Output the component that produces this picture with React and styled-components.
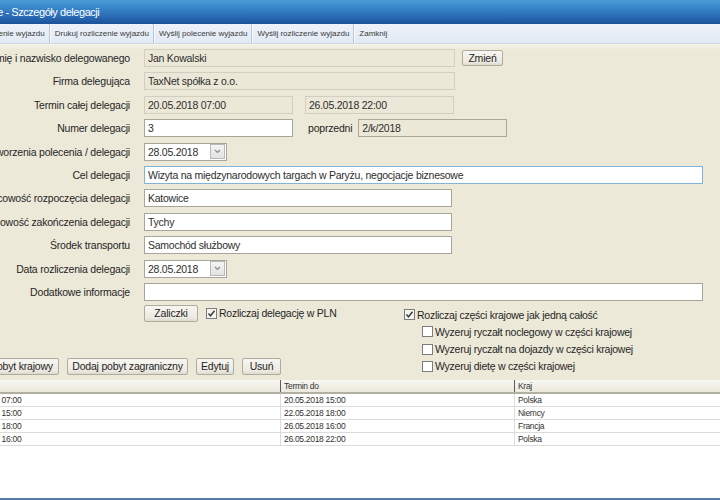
import React from 'react';
import styled, { createGlobalStyle } from 'styled-components';

const Global = createGlobalStyle`
  html, body { margin: 0; padding: 0; overflow: hidden; background: #ece9d8; }
  body { font-family: "Liberation Sans", Arial, sans-serif; }
`;

// window is partly off the left edge of the screen
const Window = styled.div`
  margin-left: -60px;
  width: 780px;
  height: 500px;
  display: flex;
  flex-direction: column;
  background: #ece9d8;
`;

const TitleBar = styled.div`
  height: 24px;
  flex: none;
  display: flex;
  align-items: center;
  padding-left: 18px;
  background: linear-gradient(#4b9bd8 0%, #3a88cb 30%, #2666b0 75%, #1c5198 100%);
  color: #fff;
  font-size: 11px;
  letter-spacing: -0.45px;
  white-space: nowrap;
`;

const Toolbar = styled.div`
  height: 19px;
  flex: none;
  display: flex;
  align-items: stretch;
  padding-left: 9px;
  background: linear-gradient(#eef3fa, #e1e9f4);
  border-bottom: 1px solid #d3dae4;
  font-size: 8px;
  color: #3a3a3a;
`;

const ToolItem = styled.div`
  display: flex;
  align-items: center;
  padding: 0 4px 0 5px;
  white-space: nowrap;
  border-right: ${p => (p.$last ? 'none' : '1px solid #bcc6d3')};
  box-shadow: ${p => (p.$last ? 'none' : '1px 0 0 #f7f9fc')};
`;

const Form = styled.div`
  display: flex;
  flex-direction: column;
  gap: 5.4px;
  padding-top: 5px;
  background: linear-gradient(#f4f2e7 0, #ece9d8 6px);
`;

const Row = styled.div`
  display: grid;
  grid-template-columns: 190px auto;
  column-gap: 14px;
  height: 18px;
  align-items: center;
`;

const Label = styled.div`
  display: flex;
  justify-content: flex-end;
  white-space: nowrap;
  font-size: 10.5px;
  letter-spacing: -0.2px;
  color: #262626;
`;

const Fields = styled.div`
  display: flex;
  align-items: center;
  gap: ${p => p.$gap || 0}px;
`;

const borders = {
  ro: '#d2cfc1',
  ro2: '#a9a799',
  edit: '#a8a59a',
  focus: '#7fb5da',
};

const Field = styled.div`
  box-sizing: border-box;
  width: ${p => p.$w}px;
  height: 18px;
  display: flex;
  align-items: center;
  padding: 0 3px;
  font-size: 10.5px;
  letter-spacing: -0.25px;
  color: #2e2e2e;
  white-space: nowrap;
  overflow: hidden;
  background: ${p => (p.$variant === 'ro' || p.$variant === 'ro2' ? '#ebe8d7' : '#fff')};
  border: 1px solid ${p => borders[p.$variant]};
`;

const InlineLabel = styled.span`
  font-size: 10.5px;
  letter-spacing: -0.2px;
  color: #262626;
  margin: 0 6px 0 15px;
  white-space: nowrap;
`;

const DateBox = styled(Field)`
  padding-right: 1px;
  justify-content: space-between;
`;

const DropButton = styled.div`
  box-sizing: border-box;
  width: 15px;
  height: 15px;
  display: flex;
  align-items: center;
  justify-content: center;
  background: linear-gradient(#f4f4f4, #e2e2e2);
  border: 1px solid #b9b9b9;
`;

const Button = styled.div`
  box-sizing: border-box;
  width: ${p => p.$w}px;
  height: ${p => p.$h || 17}px;
  margin-left: ${p => p.$ml || 0}px;
  display: flex;
  align-items: center;
  justify-content: center;
  flex: none;
  white-space: nowrap;
  font-size: 10.5px;
  letter-spacing: -0.2px;
  color: #262626;
  background: linear-gradient(#f7f6f1, #ebe9e0 80%, #dddacd);
  border: 1px solid #aeab9f;
  border-radius: 2px;
`;

const Options = styled.div`
  display: flex;
  height: 70px;
  margin-top: 4px;
`;

const LeftCol = styled.div`
  width: 464px;
  display: flex;
  flex-direction: column;
  justify-content: space-between;
`;

const OptRow = styled.div`
  display: flex;
  align-items: center;
  gap: 8px;
  padding-left: ${p => p.$pl}px;
  height: 17px;
`;

const RightCol = styled.div`
  display: flex;
  flex-direction: column;
  padding-top: 1px;
`;

const CheckRow = styled.label`
  display: flex;
  align-items: center;
  gap: 2px;
  height: 17.3px;
  padding-left: ${p => p.$indent || 0}px;
  font-size: 10.5px;
  letter-spacing: -0.25px;
  color: #262626;
  white-space: nowrap;
`;

const Box = styled.span`
  box-sizing: border-box;
  width: 11px;
  height: 11px;
  display: flex;
  align-items: center;
  justify-content: center;
  background: ${p => (p.$checked ? '#f3f3f0' : '#fff')};
  border: 1px solid #7c7c7c;
`;

const Table = styled.div`
  flex: 1;
  margin-top: 5px;
  background: #fff;
  border-bottom: 2px solid #5a79a6;
  font-size: 8.5px;
  letter-spacing: -0.3px;
  color: #333;
`;

const TRow = styled.div`
  display: grid;
  grid-template-columns: 17px 323px 234px 1fr;
  height: 12px;
  background: ${p => (p.$head ? 'linear-gradient(#f8f7f1, #ebe9dc)' : '#fff')};
  border-bottom: ${p => (p.$head ? '2px solid #b2b0a3' : '1px solid #dcdcdc')};
`;

const Cell = styled.div`
  display: flex;
  align-items: center;
  padding-left: 3px;
  white-space: nowrap;
  overflow: hidden;
  border-left: ${p => (p.$sep ? (p.$head ? '1px solid #5c5c5c' : '1px solid #dcdcdc') : 'none')};
`;

const Check = ({ checked, indent, children }) => (
  <CheckRow $indent={indent}>
    <Box $checked={checked}>
      {checked && (
        <svg width="9" height="9" viewBox="0 0 9 9">
          <polyline points="1.5,4.5 3.5,6.8 7.5,1.8" fill="none" stroke="#3a3a3a" strokeWidth="1.4" />
        </svg>
      )}
    </Box>
    {children}
  </CheckRow>
);

const DateField = ({ value }) => (
  <DateBox $w={83} $variant="edit">
    {value}
    <DropButton>
      <svg width="9" height="9" viewBox="0 0 9 9">
        <polyline points="2,3 4.5,5.5 7,3" fill="none" stroke="#8a8a8a" strokeWidth="1.2" />
      </svg>
    </DropButton>
  </DateBox>
);

const toolbarItems = [
  'Drukuj polecenie wyjazdu',
  'Drukuj rozliczenie wyjazdu',
  'Wyślij polecenie wyjazdu',
  'Wyślij rozliczenie wyjazdu',
  'Zamknij',
];

const stays = [
  ['1', '20.05.2018 07:00', '20.05.2018 15:00', 'Polska'],
  ['2', '20.05.2018 15:00', '22.05.2018 18:00', 'Niemcy'],
  ['3', '22.05.2018 18:00', '26.05.2018 16:00', 'Francja'],
  ['4', '26.05.2018 16:00', '26.05.2018 22:00', 'Polska'],
];

export default function App() {
  return (
    <>
      <Global />
      <Window>
        <TitleBar>Delegacje - Szczegóły delegacji</TitleBar>
        <Toolbar>
          {toolbarItems.map((t, i) => (
            <ToolItem key={t} $last={i === toolbarItems.length - 1}>{t}</ToolItem>
          ))}
        </Toolbar>

        <Form>
          <Row>
            <Label>Imię i nazwisko delegowanego</Label>
            <Fields>
              <Field $w={311} $variant="ro">Jan Kowalski</Field>
              <Button $w={41} $h={16} $ml={7}>Zmień</Button>
            </Fields>
          </Row>
          <Row>
            <Label>Firma delegująca</Label>
            <Fields><Field $w={311} $variant="ro">TaxNet spółka z o.o.</Field></Fields>
          </Row>
          <Row>
            <Label>Termin całej delegacji</Label>
            <Fields $gap={12}>
              <Field $w={149} $variant="ro">20.05.2018 07:00</Field>
              <Field $w={149} $variant="ro">26.05.2018 22:00</Field>
            </Fields>
          </Row>
          <Row>
            <Label>Numer delegacji</Label>
            <Fields>
              <Field $w={149} $variant="edit">3</Field>
              <InlineLabel>poprzedni</InlineLabel>
              <Field $w={149} $variant="ro2">2/k/2018</Field>
            </Fields>
          </Row>
          <Row>
            <Label>Data utworzenia polecenia / delegacji</Label>
            <Fields><DateField value="28.05.2018" /></Fields>
          </Row>
          <Row>
            <Label>Cel delegacji</Label>
            <Fields>
              <Field $w={559} $variant="focus">Wizyta na międzynarodowych targach w Paryżu, negocjacje biznesowe</Field>
            </Fields>
          </Row>
          <Row>
            <Label>Miejscowość rozpoczęcia delegacji</Label>
            <Fields><Field $w={308} $variant="edit">Katowice</Field></Fields>
          </Row>
          <Row>
            <Label>Miejscowość zakończenia delegacji</Label>
            <Fields><Field $w={308} $variant="edit">Tychy</Field></Fields>
          </Row>
          <Row>
            <Label>Środek transportu</Label>
            <Fields><Field $w={308} $variant="edit">Samochód służbowy</Field></Fields>
          </Row>
          <Row>
            <Label>Data rozliczenia delegacji</Label>
            <Fields><DateField value="28.05.2018" /></Fields>
          </Row>
          <Row>
            <Label>Dodatkowe informacje</Label>
            <Fields><Field $w={559} $variant="edit" /></Fields>
          </Row>
        </Form>

        <Options>
          <LeftCol>
            <OptRow $pl={204}>
              <Button $w={54}>Zaliczki</Button>
              <Check checked>Rozliczaj delegację w PLN</Check>
            </OptRow>
            <OptRow $pl={16}>
              <Button $w={103}>Dodaj pobyt krajowy</Button>
              <Button $w={121}>Dodaj pobyt zagraniczny</Button>
              <Button $w={38}>Edytuj</Button>
              <Button $w={39}>Usuń</Button>
            </OptRow>
          </LeftCol>
          <RightCol>
            <Check checked>Rozliczaj części krajowe jak jedną całość</Check>
            <Check indent={18}>Wyzeruj ryczałt noclegowy w części krajowej</Check>
            <Check indent={18}>Wyzeruj ryczałt na dojazdy w części krajowej</Check>
            <Check indent={18}>Wyzeruj dietę w części krajowej</Check>
          </RightCol>
        </Options>

        <Table>
          <TRow $head>
            <Cell $head>Lp.</Cell>
            <Cell $head $sep>Termin od</Cell>
            <Cell $head $sep>Termin do</Cell>
            <Cell $head $sep>Kraj</Cell>
          </TRow>
          {stays.map(s => (
            <TRow key={s[0]}>
              <Cell>{s[0]}</Cell>
              <Cell>{s[1]}</Cell>
              <Cell $sep>{s[2]}</Cell>
              <Cell $sep>{s[3]}</Cell>
            </TRow>
          ))}
        </Table>
      </Window>
    </>
  );
}
